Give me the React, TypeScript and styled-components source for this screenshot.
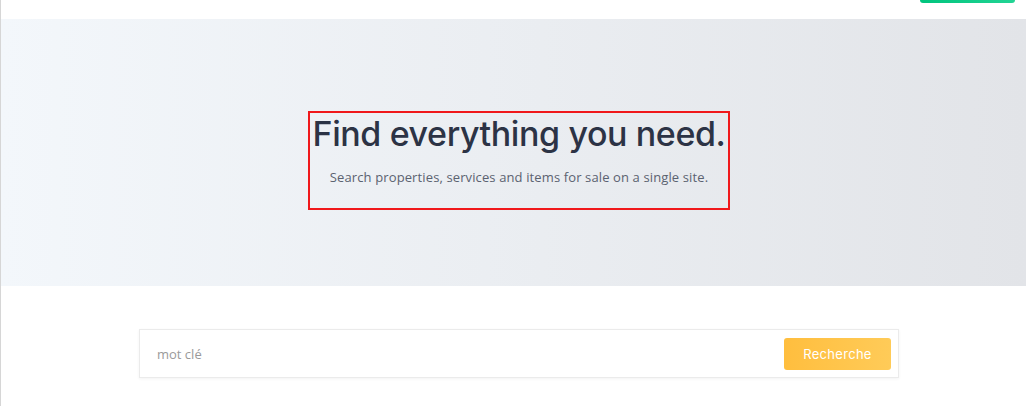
import React from "react";
import styled, { createGlobalStyle } from "styled-components";

const Global = createGlobalStyle`
  html, body { margin: 0; padding: 0; background: #ffffff; }
  body { font-family: "Open Sans", "Liberation Sans", sans-serif; overflow: hidden; }
  * { box-sizing: border-box; }
`;

const Page = styled.div`
  width: 1026px;
  height: 406px;
  border-left: 1px solid #d6d6d6;
  display: flex;
  flex-direction: column;
  overflow: hidden;
`;

const Header = styled.header`
  height: 19px;
  display: flex;
  justify-content: flex-end;
  padding-right: 11px;
  background: #ffffff;
`;

const HeaderButton = styled.button`
  width: 95px;
  height: 3px;
  border: none;
  padding: 0;
  border-radius: 0 0 3px 3px;
  background: linear-gradient(90deg, #00c47d 0%, #22d494 100%);
`;

const Hero = styled.section`
  height: 267px;
  background: linear-gradient(90deg, #f3f7fb 0%, #e2e4e8 100%);
  display: flex;
  justify-content: center;
  padding-left: 11px;
  padding-top: 92px;
`;

const Highlight = styled.div`
  width: 422px;
  height: 99px;
  border: 2px solid #f0181b;
  display: flex;
  flex-direction: column;
  align-items: center;
`;

const Title = styled.h1`
  margin: 0;
  font-family: "Inter", "Noto Sans", sans-serif;
  font-weight: 500;
  font-size: 34px;
  line-height: 42px;
  letter-spacing: -0.4px;
  color: #2c3345;
  white-space: nowrap;
`;

const Subtitle = styled.p`
  margin: 13px 0 0;
  font-family: "Open Sans", sans-serif;
  font-size: 13px;
  line-height: 18px;
  letter-spacing: 0.12px;
  color: #5b6270;
  white-space: nowrap;
`;

const SearchSection = styled.section`
  display: flex;
  justify-content: center;
  padding-left: 11px;
  padding-top: 43px;
`;

const SearchBar = styled.form`
  width: 760px;
  height: 49px;
  background: #ffffff;
  border: 1px solid #ebebeb;
  box-shadow: 0 1px 3px rgba(0, 0, 0, 0.05);
  display: flex;
  align-items: center;
  padding: 0 7px 0 17px;
`;

const KeywordInput = styled.input`
  flex: 1;
  border: none;
  outline: none;
  background: transparent;
  font-family: "Open Sans", sans-serif;
  font-size: 13px;
  color: #333;
  padding: 0;
  &::placeholder { color: #9a9a9a; }
`;

const SearchButton = styled.button`
  width: 107px;
  height: 32px;
  border: none;
  border-radius: 3px;
  background: linear-gradient(90deg, #ffbe3e 0%, #ffcb58 100%);
  color: #ffffff;
  font-family: "Inter", "Noto Sans", sans-serif;
  font-size: 13px;
  font-weight: 400;
  letter-spacing: 0.3px;
  cursor: pointer;
`;

export default function App() {
  return (
    <>
      <Global />
      <Page>
        <Header>
          <HeaderButton aria-label="menu" />
        </Header>
        <Hero>
          <Highlight>
            <Title>Find everything you need.</Title>
            <Subtitle>Search properties, services and items for sale on a single site.</Subtitle>
          </Highlight>
        </Hero>
        <SearchSection>
          <SearchBar onSubmit={(e) => e.preventDefault()}>
            <KeywordInput placeholder="mot clé" />
            <SearchButton type="submit">Recherche</SearchButton>
          </SearchBar>
        </SearchSection>
      </Page>
    </>
  );
}
